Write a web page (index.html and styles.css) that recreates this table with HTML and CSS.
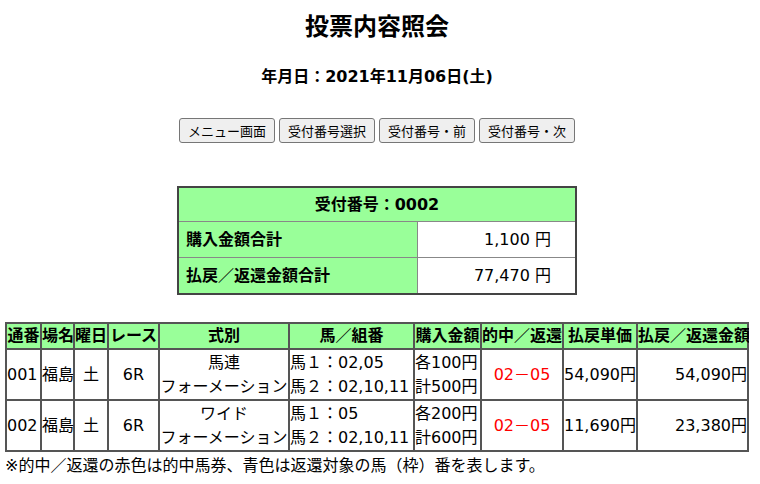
FILE: index.html
```html
<!DOCTYPE html>
<html lang="ja">
<head>
<meta charset="utf-8">
<title>投票内容照会</title>
<link rel="stylesheet" href="styles.css">
</head>
<body>
<h1 class="title">投票内容照会</h1>
<p class="date">年月日：2021年11月06日(土)</p>
<div class="buttons">
  <button class="btn">メニュー画面</button>
  <button class="btn">受付番号選択</button>
  <button class="btn">受付番号・前</button>
  <button class="btn">受付番号・次</button>
</div>
<table class="summary">
  <tr><th colspan="2" class="sum-head">受付番号：0002</th></tr>
  <tr><th class="sum-label">購入金額合計</th><td class="sum-val">1,100 円</td></tr>
  <tr><th class="sum-label">払戻／返還金額合計</th><td class="sum-val">77,470 円</td></tr>
</table>
<table class="detail">
  <tr class="head">
    <th class="w1">通番</th><th class="w2">場名</th><th class="w3">曜日</th><th class="w4">レース</th><th class="w5">式別</th>
    <th class="w6">馬／組番</th><th class="w7">購入金額</th><th class="w8">的中／返還</th><th class="w9">払戻単価</th><th class="w10">払戻／返還金額</th>
  </tr>
  <tr>
    <td class="l">001</td><td class="l">福島</td><td class="c">土</td><td class="c">6R</td>
    <td class="c">馬連<br>フォーメーション</td>
    <td class="l">馬１：02,05<br>馬２：02,10,11</td>
    <td class="l">各100円<br>計500円</td>
    <td class="c hit">02－05</td>
    <td class="l">54,090円</td>
    <td class="r">54,090円</td>
  </tr>
  <tr>
    <td class="l">002</td><td class="l">福島</td><td class="c">土</td><td class="c">6R</td>
    <td class="c">ワイド<br>フォーメーション</td>
    <td class="l">馬１：05<br>馬２：02,10,11</td>
    <td class="l">各200円<br>計600円</td>
    <td class="c hit">02－05</td>
    <td class="l">11,690円</td>
    <td class="r">23,380円</td>
  </tr>
</table>
<p class="note">※的中／返還の赤色は的中馬券、青色は返還対象の馬（枠）番を表します。</p>
</body>
</html>
```

FILE: styles.css
```css
html, body {
  background: #ffffff;
}
body {
  margin: 0 11px 0 5px;
  font-family: "DejaVu Sans", "Noto Sans CJK JP", sans-serif;
  font-size: 16px;
  color: #000;
}
.title {
  margin: 0;
  padding-top: 12px;
  font-size: 24px;
  line-height: 30px;
  font-weight: bold;
  text-align: center;
}
.date {
  margin: 25px 0 0;
  font-size: 16px;
  line-height: 20px;
  font-weight: bold;
  text-align: center;
}
.buttons {
  margin-top: 31px;
  display: flex;
  justify-content: center;
  gap: 4px;
}
.btn {
  height: 25px;
  padding: 0 8px;
  font-family: "DejaVu Sans", "Noto Sans CJK JP", sans-serif;
  font-size: 13px;
  color: #000;
  background: #efefef;
  border: 1px solid #767676;
  border-radius: 3px;
}
.summary {
  margin: 43px auto 0;
  width: 400px;
  border-collapse: collapse;
  border: 2px solid #444;
  background: #99ff99;
}
.summary th, .summary td {
  border: 1px solid #888;
  padding: 0;
  line-height: 20px;
}
.sum-head {
  height: 33px;
  text-align: center;
  font-weight: bold;
}
.sum-label {
  height: 35px;
  text-align: left;
  padding-left: 7px !important;
  width: 231px;
  font-weight: bold;
}
.sum-val {
  height: 35px;
  background: #fff;
  text-align: right;
  padding-right: 24px !important;
}
.detail {
  margin-top: 27px;
  width: 744px;
  table-layout: fixed;
  border-collapse: collapse;
  border: 2px solid #555;
}
.detail th, .detail td {
  border: 2px solid #555;
  padding: 0;
  white-space: nowrap;
  overflow: visible;
}
.detail .head th {
  background: #99ff99;
  height: 24px;
  line-height: 22px;
  font-weight: bold;
  text-align: center;
}
.detail td {
  line-height: 24px;
  height: 49px;
}
.w1 { width: 33px; }
.w2 { width: 31px; }
.w3 { width: 32px; }
.w4 { width: 49px; }
.w5 { width: 128px; }
.w6 { width: 123px; }
.w7 { width: 65px; }
.w8 { width: 80px; }
.w9 { width: 72px; }
.w10 { width: 109px; }
.l { text-align: left; }
.c { text-align: center; }
.r { text-align: right; }
.hit { color: #ff0000; }
.note {
  margin: 4px 0 0;
  line-height: 20px;
}
```
